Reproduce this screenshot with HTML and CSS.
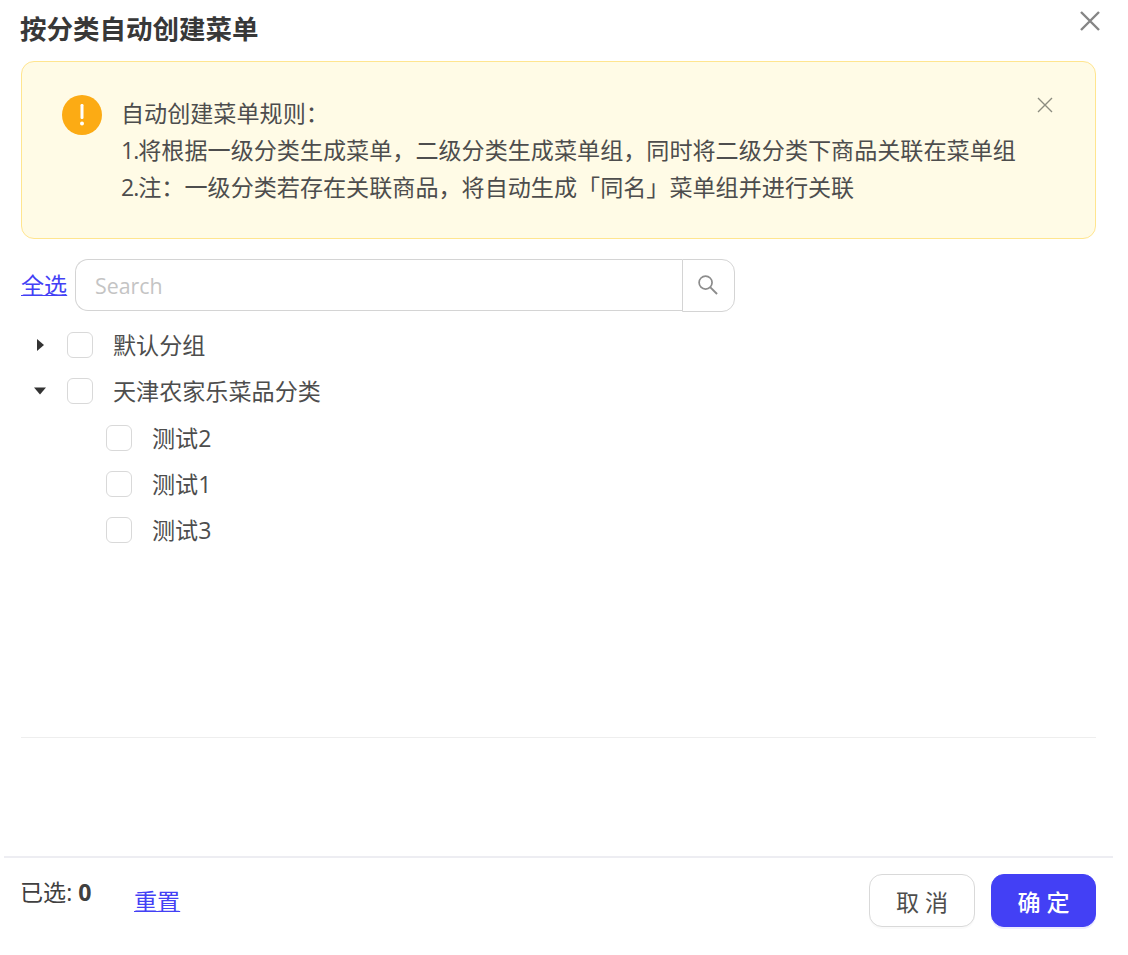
FILE: index.html
```html
<!DOCTYPE html>
<html lang="zh-CN">
<head>
<meta charset="utf-8">
<title>按分类自动创建菜单</title>
<link rel="stylesheet" href="styles.css">
</head>
<body>
<div class="modal">
  <button class="modal-close" aria-label="关闭">
    <svg viewBox="0 0 22 22" width="22" height="22"><path d="M2 2L20 20M20 2L2 20" stroke="#858585" stroke-width="2.4" fill="none"/></svg>
  </button>
  <div class="body">
    <h1 class="title">按分类自动创建菜单</h1>
    <div class="alert">
      <svg class="alert-icon" viewBox="0 0 40 40" width="40" height="40"><circle cx="20" cy="20" r="20" fill="#fcab14"/><rect x="18.5" y="9" width="3" height="15" rx="1.2" fill="#fff"/><circle cx="20" cy="28.500" r="2" fill="#fff"/></svg>
      <div class="alert-text">
        <div>自动创建菜单规则：</div>
        <div><span class="num">1.</span>将根据一级分类生成菜单，二级分类生成菜单组，同时将二级分类下商品关联在菜单组</div>
        <div><span class="num">2.</span>注：一级分类若存在关联商品，将自动生成「同名」菜单组并进行关联</div>
      </div>
      <svg class="alert-close" viewBox="0 0 16 16" width="16" height="16"><path d="M1 1L15 15M15 1L1 15" stroke="#8c8c80" stroke-width="1.4" fill="none"/></svg>
    </div>
    <div class="toolbar">
      <a class="link select-all">全选</a>
      <div class="search">
        <input class="search-input" placeholder="Search">
        <span class="search-btn">
          <svg viewBox="0 0 22 22" width="21" height="21"><circle cx="9" cy="9" r="6.800" stroke="#8c8c8c" stroke-width="1.800" fill="none"/><path d="M14 14L21 21" stroke="#8c8c8c" stroke-width="2" fill="none"/></svg>
        </span>
      </div>
    </div>
    <ul class="tree">
      <li class="row"><svg class="caret" viewBox="0 0 12 12" width="12" height="12"><path d="M3 0L10 6L3 12Z" fill="#333"/></svg><span class="check"></span><span class="label">默认分组</span></li>
      <li class="row"><svg class="caret" viewBox="0 0 14 12" width="12" height="12"><path d="M0 2H14L7 10Z" fill="#333"/></svg><span class="check"></span><span class="label">天津农家乐菜品分类</span></li>
      <li class="row child"><span class="check"></span><span class="label">测试2</span></li>
      <li class="row child"><span class="check"></span><span class="label">测试1</span></li>
      <li class="row child"><span class="check"></span><span class="label">测试3</span></li>
    </ul>
    <div class="divider"></div>
  </div>
  <div class="footer">
    <div class="selected">已选: <b>0</b></div>
    <a class="link reset">重置</a>
    <div class="actions">
      <button class="btn">取 消</button>
      <button class="btn primary">确 定</button>
    </div>
  </div>
</div>
</body>
</html>
```
FILE: styles.css
```css
* { box-sizing: border-box; }
html, body { margin: 0; padding: 0; background: #fff; }
body {
  width: 1128px;
  height: 955px;
  overflow: hidden;
  font-family: "Open Sans", "Noto Sans CJK SC", sans-serif;
  color: #333;
}
.modal { position: relative; width: 1117px; height: 955px; }
.modal-close {
  position: absolute; top: 10px; left: 1079px;
  width: 22px; height: 22px; padding: 0; border: 0; background: none; display: block;
}
.modal-close svg { display: block; }
.body { padding: 0 21px; height: 856px; }
.title {
  margin: 0 0 0 -1px; padding-top: 11px; height: 61px;
  font-size: 26.500px; line-height: 36px; font-weight: 700; color: #383838;
}
.alert {
  display: flex; align-items: flex-start;
  width: 1075px; height: 178px;
  padding: 33px 42px 0 40px;
  background: #fffbe6;
  border: 1px solid #ffe58f;
  border-radius: 13px;
}
.alert-icon { flex: none; }
.alert-text {
  flex: 1; margin-left: 19px;
  font-size: 23.100px; line-height: 37px; color: #4d4d4d;
}
.num { letter-spacing: -1px; }
.alert-close { flex: none; margin-top: 2px; }
.toolbar { display: flex; align-items: center; margin-top: 20px; }
.link { color: #4340f5; text-decoration: underline; text-decoration-thickness: 1px; cursor: pointer; }
.select-all { font-size: 23.100px; line-height: 52px; width: 54px; text-underline-offset: 1px; }
.search { display: flex; width: 660px; height: 52px; }
.search-input {
  width: 608px; height: 52px; padding: 0 19px;
  border: 1px solid #d4d4d4; border-right: 0;
  border-radius: 13px 0 0 13px;
  font: 21.330px "Open Sans", "Noto Sans CJK SC", sans-serif;
  outline: none;
}
.search-input::placeholder { color: #c4c4c4; }
.search-btn {
  width: 53px; height: 53px; padding: 0 2px 2px 0;
  display: flex; align-items: center; justify-content: center;
  border: 1px solid #d4d4d4;
  border-radius: 0 13px 13px 0;
}
.tree { list-style: none; margin: 11.300px 0 0; padding: 0; }
.row { display: flex; align-items: center; height: 46.100px; padding-left: 13px; }
.row.child { padding-left: 85px; }
.caret { flex: none; width: 12px; margin-right: 21px; }
.check {
  flex: none; width: 26px; height: 26px;
  background: #fff; border: 1px solid #d9d9d9; border-radius: 6px;
}
.row .check { margin-right: 20px; }
.label { font-size: 23.100px; line-height: 32px; color: #4d4d4d; }
.divider { height: 1px; margin-top: 184.200px; background: #eeeeee; }
.footer {
  display: flex; align-items: flex-start;
  height: 99px; margin-left: 4px; width: 1109px;
  border-top: 2px solid #ededf2;
  padding: 16px 17px 0 17px;
}
.selected { font-size: 23.100px; line-height: 36px; width: 113px; margin-left: -1px; margin-right: 1px; color: #404040; }
.reset { font-size: 23.100px; line-height: 54px; }
.actions { display: flex; gap: 16px; margin-left: auto; }
.btn {
  width: 106px; height: 53px; padding: 0;
  background: #fff; border: 1px solid #d9d9d9; border-radius: 13px;
  font: 23.100px "Open Sans", "Noto Sans CJK SC", sans-serif; color: #4d4d4d;
  box-shadow: 0 2px 0 rgba(0, 0, 0, 0.02);
}
.btn.primary {
  width: 105px; background: #4340f5; border-color: #4340f5; color: #fff; font-weight: 500;
  box-shadow: 0 2px 0 rgba(67, 64, 245, 0.1);
}
```
